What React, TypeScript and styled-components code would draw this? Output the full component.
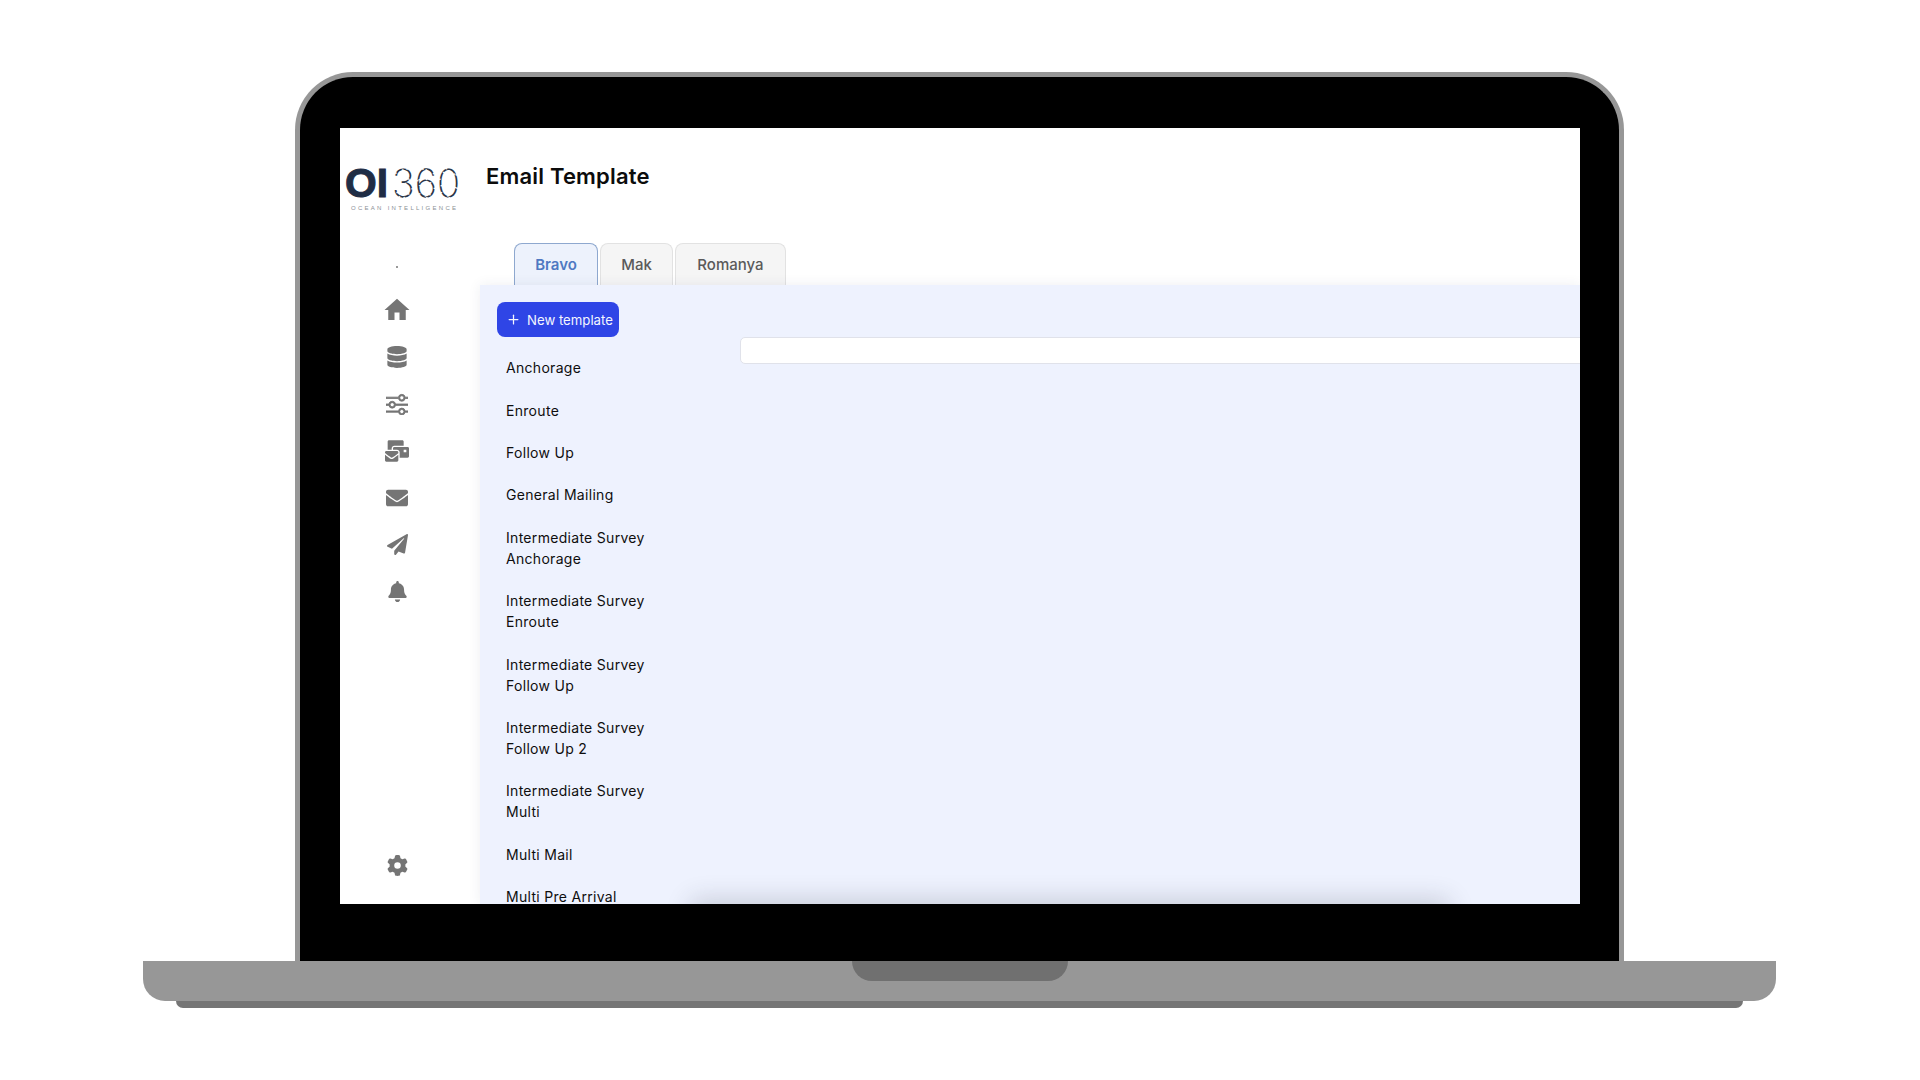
import React from 'react';
import styled, { createGlobalStyle } from 'styled-components';
import { BsSliders } from 'react-icons/bs';
import { FaBell, FaDatabase, FaEnvelope, FaMailBulk, FaPaperPlane } from 'react-icons/fa';
import { FaGear } from 'react-icons/fa6';
import { MdHome } from 'react-icons/md';
import { Plus } from 'lucide-react';

const GlobalStyle = createGlobalStyle`
  html, body {
    margin: 0;
    padding: 0;
    background: #fff;
    font-family: Inter, "Liberation Sans", sans-serif;
  }
`;

const Page = styled.div`
  width: 1920px;
  height: 1080px;
  padding-top: 72px;
  box-sizing: border-box;
  overflow: hidden;
`;

const Lid = styled.div`
  box-sizing: border-box;
  width: 1329px;
  height: 889px;
  margin-left: 295px;
  padding: 51px 39px 57px 40px;
  background: #000;
  border: 5px solid #979797;
  border-bottom: none;
  border-radius: 58px 58px 0 0;
`;

const Screen = styled.div`
  display: flex;
  height: 776px;
  background: #fff;
  overflow: hidden;
`;

const Sidebar = styled.aside`
  flex: 0 0 140px;
  display: flex;
  flex-direction: column;
  padding: 29px 0 15px;
  box-sizing: border-box;
`;

const Logo = styled.svg`
  display: block;
  width: 120px;
  height: 56px;
  margin-left: 3px;
`;

const Dot = styled.div`
  width: 2px;
  height: 2px;
  margin: 53px 0 0 56px;
  border-radius: 50%;
  background: #777;
`;

const Nav = styled.nav`
  display: flex;
  flex-direction: column;
  align-items: center;
  flex: 1;
  width: 114px;
  margin-top: 19px;
`;

const NavIcon = styled.div<{ $size: number }>`
  display: flex;
  align-items: center;
  justify-content: center;
  height: 46.9px;
  color: #757575;
  font-size: ${(p) => p.$size}px;
`;

const BottomIcon = styled(NavIcon)`
  margin-top: auto;
`;

const Main = styled.main`
  flex: 1;
  min-width: 0;
  display: flex;
  flex-direction: column;
`;

const Title = styled.h1`
  height: 115px;
  margin: 0;
  padding: 32px 0 0 6px;
  box-sizing: border-box;
  font-size: 22px;
  line-height: 32px;
  font-weight: 600;
  letter-spacing: 0.18px;
  color: #0c0c0c;
`;

const Tabs = styled.div`
  display: flex;
  gap: 2px;
  height: 42px;
  margin-left: 34px;
`;

const Tab = styled.button<{ $active?: boolean; $width: number }>`
  width: ${(p) => p.$width}px;
  height: 44px;
  padding: 0 0 2px;
  font-family: inherit;
  font-size: 15px;
  font-weight: ${(p) => (p.$active ? 600 : 500)};
  color: ${(p) => (p.$active ? '#4f79c2' : '#5a5a5a')};
  background: ${(p) => (p.$active ? '#edf2fc' : '#f5f5f5')};
  border: 1px solid ${(p) => (p.$active ? '#8ea8cf' : '#e2e2e2')};
  border-bottom: none;
  border-radius: 8px 8px 0 0;
`;

const Panel = styled.section`
  position: relative;
  z-index: 1;
  flex: 1;
  display: flex;
  padding: 17px 0 0 17px;
  background: #eef2fe;
  box-shadow: 0 0 12px rgba(40, 50, 90, 0.08);
  overflow: hidden;
`;

const ListColumn = styled.div`
  flex: 0 0 243px;
`;

const NewButton = styled.button`
  display: flex;
  align-items: center;
  gap: 6px;
  width: 122px;
  height: 35px;
  padding: 0 0 0 9px;
  color: #f4f6ff;
  font-family: inherit;
  font-size: 13.2px;
  background: #2f45e6;
  border: none;
  border-radius: 8px;
`;

const TemplateList = styled.ul`
  margin: 9.3px 0 0;
  padding: 0;
  list-style: none;
`;

const TemplateItem = styled.li`
  width: 150px;
  padding: 10.9px 0 10.5px 9px;
  font-size: 14px;
  line-height: 21px;
  letter-spacing: 0.3px;
  color: #0e0e0e;
`;

const EditorColumn = styled.div`
  flex: 1;
  min-width: 0;
  padding-top: 35px;
`;

const SubjectInput = styled.div`
  box-sizing: border-box;
  width: 900px;
  height: 27px;
  background: #fff;
  border: 1px solid #e0e2ea;
  border-radius: 5px;
`;

const BottomShade = styled.div`
  position: absolute;
  left: 215px;
  bottom: -22px;
  width: 750px;
  height: 22px;
  box-shadow: 0 0 26px 4px rgba(40, 45, 60, 0.2);
`;

const Base = styled.div`
  position: relative;
  display: flex;
  justify-content: center;
  width: 1633px;
  height: 40px;
  margin-left: 143px;
  background: #979797;
  border-radius: 0 0 22px 22px;
`;

const Notch = styled.div`
  width: 216px;
  height: 20px;
  background: #707070;
  border-radius: 0 0 20px 20px;
`;

const Foot = styled.div`
  width: 1567px;
  height: 7px;
  margin-left: 176px;
  background: #757575;
  border-radius: 0 0 8px 8px;
`;

const templates = [
  'Anchorage',
  'Enroute',
  'Follow Up',
  'General Mailing',
  'Intermediate Survey Anchorage',
  'Intermediate Survey Enroute',
  'Intermediate Survey Follow Up',
  'Intermediate Survey Follow Up 2',
  'Intermediate Survey Multi',
  'Multi Mail',
  'Multi Pre Arrival',
];

const App: React.FC = (): React.ReactElement => {
  return (
    <>
      <GlobalStyle />
      <Page>
        <Lid>
          <Screen>
            <Sidebar>
              <Logo viewBox="0 0 120 56">
                <text x="2" y="40" fontFamily="Liberation Sans" fontWeight="700" fontSize="40" fill="#1f2d45" stroke="#1f2d45" strokeWidth="1" textLength="43" lengthAdjust="spacingAndGlyphs">OI</text>
                <text x="49" y="40" fontFamily="Inter" fontWeight="200" fontSize="39" fill="#2a3548" textLength="68" lengthAdjust="spacingAndGlyphs">360</text>
                <text x="49" y="40" fontFamily="Inter" fontWeight="200" fontSize="39" fill="none" stroke="#fff" strokeWidth="1.5" strokeDasharray="1.3 12" textLength="68" lengthAdjust="spacingAndGlyphs">360</text>
                <text x="8" y="52.5" fontFamily="Liberation Sans" fontSize="6" fill="#8b8f96" textLength="105">OCEAN INTELLIGENCE</text>
              </Logo>
              <Dot />
              <Nav>
                <NavIcon $size={30}><MdHome /></NavIcon>
                <NavIcon $size={22}><FaDatabase /></NavIcon>
                <NavIcon $size={22}><BsSliders stroke="currentColor" strokeWidth={0.6} /></NavIcon>
                <NavIcon $size={24}><FaMailBulk /></NavIcon>
                <NavIcon $size={22}><FaEnvelope /></NavIcon>
                <NavIcon $size={21}><FaPaperPlane /></NavIcon>
                <NavIcon $size={21}><FaBell /></NavIcon>
                <BottomIcon $size={21}><FaGear /></BottomIcon>
              </Nav>
            </Sidebar>
            <Main>
              <Title>Email Template</Title>
              <Tabs>
                <Tab $active $width={84}>Bravo</Tab>
                <Tab $width={73}>Mak</Tab>
                <Tab $width={111}>Romanya</Tab>
              </Tabs>
              <Panel>
                <ListColumn>
                  <NewButton>
                    <Plus size={15} strokeWidth={2} />
                    New template
                  </NewButton>
                  <TemplateList>
                    {templates.map((name) => (
                      <TemplateItem key={name}>{name}</TemplateItem>
                    ))}
                  </TemplateList>
                </ListColumn>
                <EditorColumn>
                  <SubjectInput />
                </EditorColumn>
                <BottomShade />
              </Panel>
            </Main>
          </Screen>
        </Lid>
        <Base>
          <Notch />
        </Base>
        <Foot />
      </Page>
    </>
  );
};

export default App;
